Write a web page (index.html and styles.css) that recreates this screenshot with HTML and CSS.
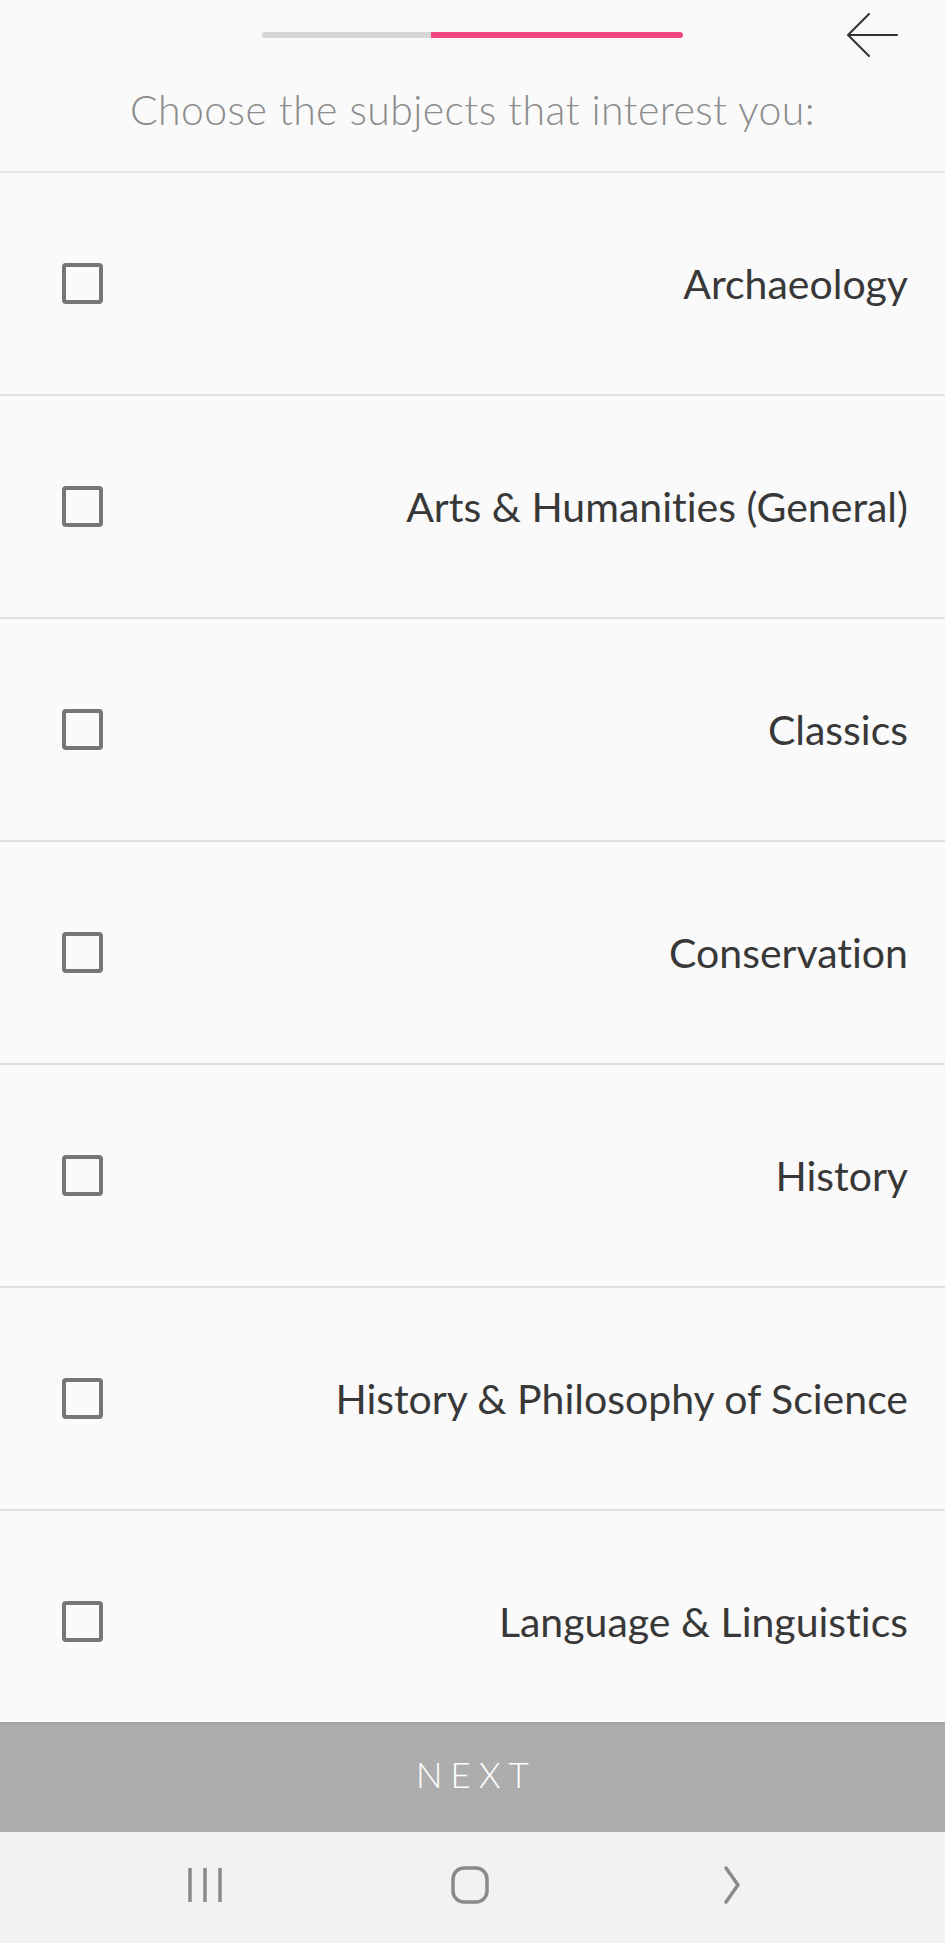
FILE: index.html
```html
<!DOCTYPE html>
<html>
<head>
<meta charset="utf-8">
<link rel="stylesheet" href="styles.css">
</head>
<body>
<div class="screen">
  <header class="header">
    <div class="topbar">
      <div></div>
      <div class="progress"><div class="progress-done"></div><div class="progress-todo"></div></div>
      <div class="back">
        <svg width="52" height="44" viewBox="0 0 52 44"><path d="M51 22 H2 M2 22 L23 1 M2 22 L23 43" fill="none" stroke="#333" stroke-width="2" stroke-linecap="round"/></svg>
      </div>
    </div>
    <h1 class="title">Choose the subjects that interest you:</h1>
  </header>
  <main class="list">
    <div class="row"><span class="box"></span><span class="label">Archaeology</span></div>
    <div class="row"><span class="box"></span><span class="label">Arts &amp; Humanities (General)</span></div>
    <div class="row"><span class="box"></span><span class="label">Classics</span></div>
    <div class="row"><span class="box"></span><span class="label">Conservation</span></div>
    <div class="row"><span class="box"></span><span class="label">History</span></div>
    <div class="row"><span class="box"></span><span class="label">History &amp; Philosophy of Science</span></div>
    <div class="row"><span class="box"></span><span class="label">Language &amp; Linguistics</span></div>
  </main>
  <button class="next">NEXT</button>
  <nav class="navbar">
    <svg width="40" height="40" viewBox="0 0 40 40"><path d="M5 3 V37 M20 3 V37 M35 3 V37" stroke="#8a8a8a" stroke-width="3.5"/></svg>
    <svg width="40" height="40" viewBox="0 0 40 40"><rect x="3" y="3" width="34" height="34" rx="11" fill="none" stroke="#8a8a8a" stroke-width="3.5"/></svg>
    <svg width="40" height="40" viewBox="0 0 40 40"><path d="M12 3 L24 20 L12 37" fill="none" stroke="#8a8a8a" stroke-width="3.5" stroke-linecap="round" stroke-linejoin="round"/></svg>
  </nav>
</div>
</body>
</html>
```

FILE: styles.css
```css
* { box-sizing: border-box; }
html, body { margin: 0; padding: 0; }
body { background: #fafafa; font-family: "Lato", "Liberation Sans", sans-serif; font-variant-ligatures: none; }
.screen { width: 945px; height: 1943px; display: flex; flex-direction: column; overflow: hidden; background: #fafafa; }
.header { height: 173px; border-bottom: 2px solid #e6e6e6; flex: none; }
.topbar { display: grid; grid-template-columns: 1fr 421px 1fr; align-items: center; height: 70px; }
.progress { display: flex; height: 6px; border-radius: 3px; overflow: hidden; }
.progress-done { width: 169px; background: #d6d6d6; }
.progress-todo { flex: 1; background: #f4477f; }
.back { display: flex; justify-content: flex-end; padding-right: 47px; }
.title { margin: 16px 0 0; text-align: center; font-weight: 300; font-size: 41px; line-height: 48px; color: #8c8c8c; letter-spacing: 0.4px; }
.list { flex: 1; overflow: hidden; min-height: 0; }
.row { height: 223px; border-bottom: 2px solid #e0e0e0; display: flex; align-items: center; justify-content: space-between; padding: 0 37px 0 62px; }
.box { width: 41px; height: 41px; border: 4px solid #767676; border-radius: 4px; flex: none; }
.label { font-size: 41px; font-weight: 400; color: #383838; }
.next { flex: none; height: 110px; border: none; border-top: 3px solid #a6a6a6; background: #adadad; color: #fff; font-family: "Lato", "Liberation Sans", sans-serif; font-weight: 300; font-size: 35px; letter-spacing: 8px; padding: 0 0 10px 8px; margin: 0; }
.navbar { flex: none; height: 111px; background: #f2f2f2; display: flex; align-items: center; justify-content: space-between; padding: 0 191px 6px 185px; }
```
